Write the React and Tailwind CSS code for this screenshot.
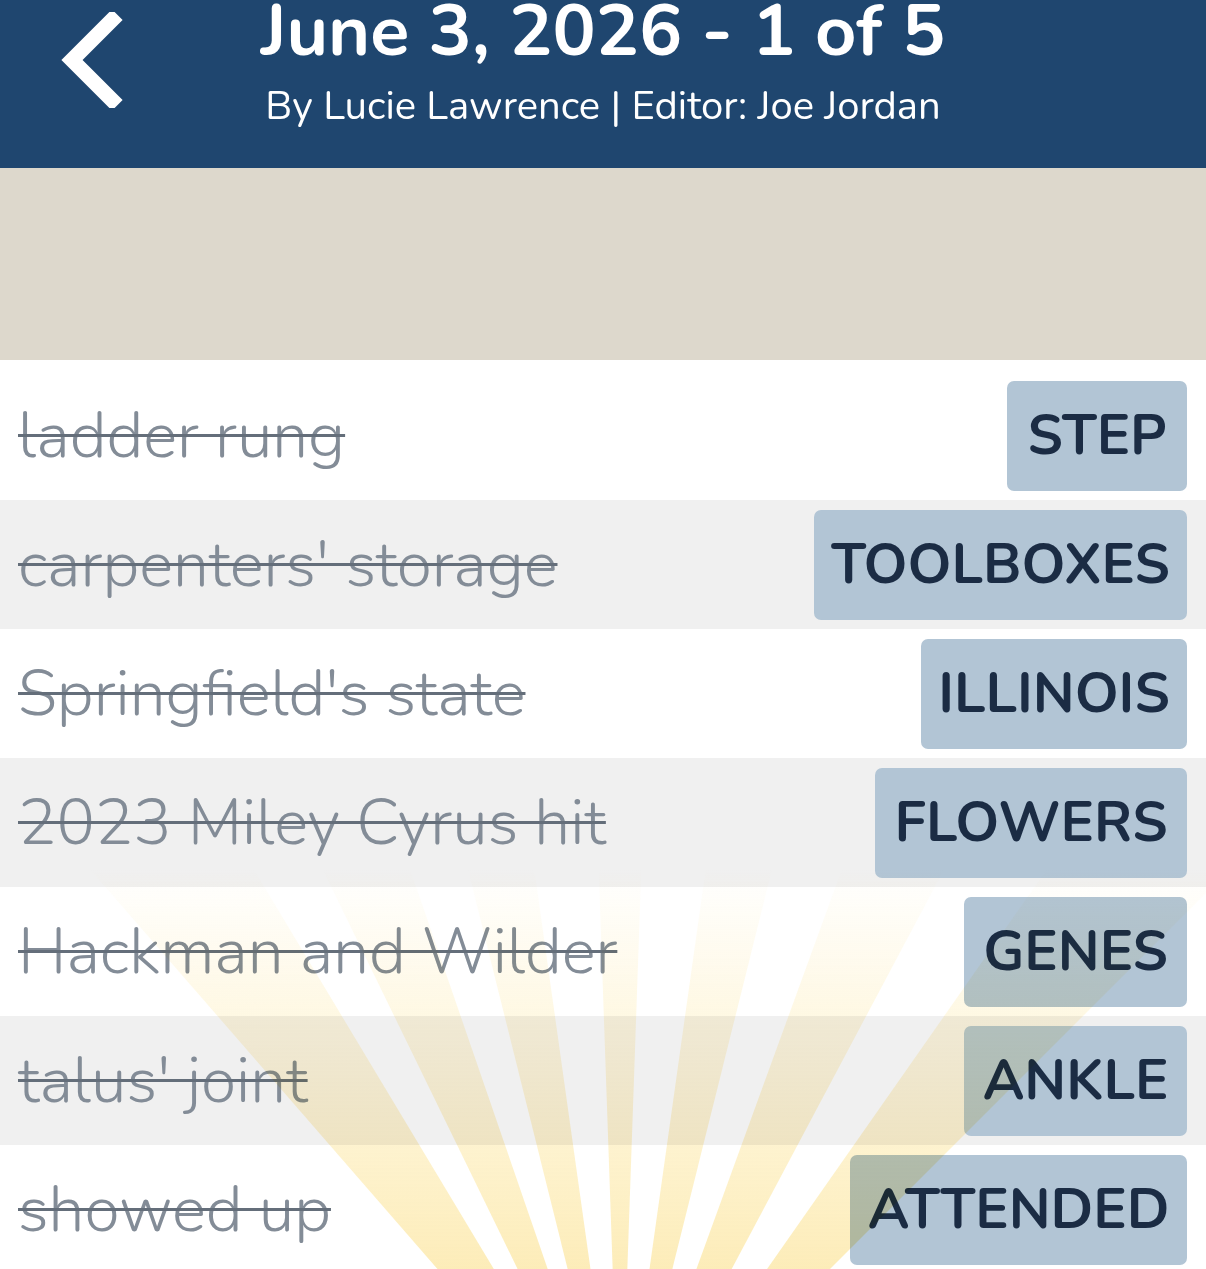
import React from 'react';

const clues = [
    { clue: 'ladder rung', answer: 'STEP', w: 'w-[180px]' },
    { clue: "carpenters' storage", answer: 'TOOLBOXES', w: 'w-[373px]' },
    { clue: "Springfield's state", answer: 'ILLINOIS', w: 'w-[266px]' },
    { clue: '2023 Miley Cyrus hit', answer: 'FLOWERS', w: 'w-[312px]' },
    { clue: 'Hackman and Wilder', answer: 'GENES', w: 'w-[223px]' },
    { clue: "talus' joint", answer: 'ANKLE', w: 'w-[223px]' },
    { clue: 'showed up', answer: 'ATTENDED', w: 'w-[337px]' },
];

// faded sun rays coming up from below the list
const Rays = () => {
    const rays = [
        [-41, -31], [-26, -19], [-14, -8], [-2, 2], [8, 14], [20, 28], [35, 45],
    ];
    const cx = 620;
    const cy = 1480;
    const r = 900;
    const pt = (deg) => {
        const a = (deg * Math.PI) / 180;
        return `${cx + r * Math.sin(a)},${cy - r * Math.cos(a)}`;
    };
    return (
        <svg className="absolute left-0 bottom-0 pointer-events-none mix-blend-multiply" width="1206" height="420" viewBox="0 850 1206 420">
            <defs>
                <linearGradient id="ray" x1="0" y1="870" x2="0" y2="1269" gradientUnits="userSpaceOnUse">
                    <stop offset="0" stopColor="#fde9a8" stopOpacity="0" />
                    <stop offset="0.4" stopColor="#fde9a8" stopOpacity="0.35" />
                    <stop offset="1" stopColor="#fbe08a" stopOpacity="0.6" />
                </linearGradient>
            </defs>
            {rays.map(([a, b], i) => (
                <polygon key={i} points={`${cx},${cy} ${pt(a)} ${pt(b)}`} fill="url(#ray)" />
            ))}
        </svg>
    );
};

const App = () => {
    return (
        <div className="w-[1206px] h-[1269px] overflow-hidden bg-white font-['Nunito','Lato',sans-serif] relative">
            <header className="h-[168px] bg-[#1f466f] text-white relative flex flex-col items-center">
                <svg className="absolute left-[58px] top-[12px]" width="68" height="96" viewBox="0 0 68 96">
                    <polyline points="54,8 14,48 54,88" fill="none" stroke="white" strokeWidth="15" strokeLinecap="square" />
                </svg>
                <h1 className="mt-[-9px] text-[72px] leading-[80px] font-bold whitespace-nowrap">June 3, 2026 - 1 of 5</h1>
                <p className="mt-[13px] text-[40px] leading-[44px] whitespace-nowrap">By Lucie Lawrence | Editor: Joe Jordan</p>
            </header>
            <div className="h-[192px] bg-[#ddd8cc]" />
            <div className="pt-[11px]">
                {clues.map((c, i) => (
                    <div key={c.clue} className={`h-[129px] flex items-center justify-between pl-[18px] pr-[19px] ${i % 2 === 1 ? 'bg-[#f0f0f0]' : 'bg-white'}`}>
                        <span className="text-[64px] leading-none font-light text-[#838c97] line-through decoration-[3px] decoration-[#646e7a] whitespace-nowrap">{c.clue}</span>
                        <div className={`${c.w} h-[110px] rounded-[7px] bg-[#b2c5d5] flex items-center justify-center text-[56px] font-bold text-[#1b2c44]`}>
                            {c.answer}
                        </div>
                    </div>
                ))}
            </div>
            <Rays />
        </div>
    );
};

export default App;
